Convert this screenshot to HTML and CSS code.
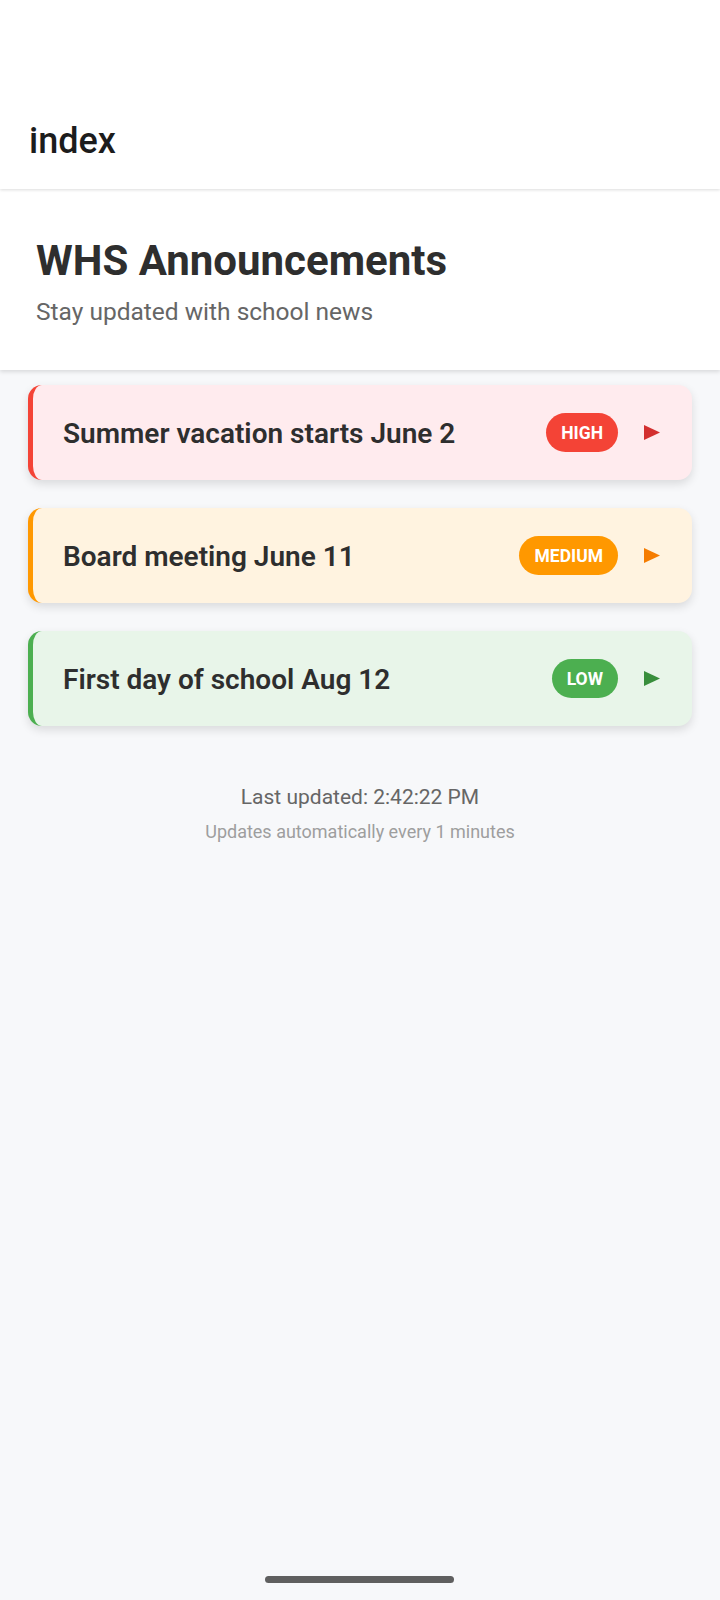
FILE: index.html
```html
<!DOCTYPE html>
<html lang="en">
<head>
<meta charset="utf-8">
<title>index</title>
<link rel="stylesheet" href="styles.css">
</head>
<body>
<div class="appbar"><span class="appbar-title">index</span></div>
<header class="intro">
  <h1 class="intro-title">WHS Announcements</h1>
  <p class="intro-sub">Stay updated with school news</p>
</header>
<main class="list">
  <div class="card card-high">
    <span class="card-text">Summer vacation starts June 2</span>
    <span class="badge badge-high">HIGH</span>
    <svg class="arrow" width="16" height="15" viewBox="0 0 16 15"><polygon points="0,0 16,7.5 0,15" fill="#d32f2f"/></svg>
  </div>
  <div class="card card-medium">
    <span class="card-text">Board meeting June 11</span>
    <span class="badge badge-medium">MEDIUM</span>
    <svg class="arrow" width="16" height="15" viewBox="0 0 16 15"><polygon points="0,0 16,7.5 0,15" fill="#f57c00"/></svg>
  </div>
  <div class="card card-low">
    <span class="card-text">First day of school Aug 12</span>
    <span class="badge badge-low">LOW</span>
    <svg class="arrow" width="16" height="15" viewBox="0 0 16 15"><polygon points="0,0 16,7.5 0,15" fill="#388e3c"/></svg>
  </div>
</main>
<footer class="footer">
  <p class="footer-main">Last updated: 2:42:22 PM</p>
  <p class="footer-sub">Updates automatically every 1 minutes</p>
</footer>
<div class="home-bar"></div>
</body>
</html>
```
FILE: styles.css
```css
* { box-sizing: border-box; }
html, body { margin: 0; padding: 0; }
body {
  background: #f7f8fa;
  font-family: Roboto, "Noto Sans", sans-serif;
  min-height: 1600px;
}
.appbar {
  height: 189px;
  background: #ffffff;
  display: flex;
  align-items: flex-end;
  padding: 0 0 28px 29px;
  position: relative;
  z-index: 2;
  box-shadow: 0 1px 3px rgba(0,0,0,0.14);
}
.appbar-title {
  font-size: 36px;
  line-height: 40px;
  font-weight: 500;
  color: #1c1c1c;
}
.intro {
  background: #ffffff;
  padding: 47px 36px 43px;
  box-shadow: 0 2px 4px rgba(0,0,0,0.12);
  position: relative;
  z-index: 1;
}
.intro-title {
  margin: 0;
  font-size: 42px;
  line-height: 50px;
  font-weight: 700;
  color: #2e2e2e;
}
.intro-sub {
  margin: 11px 0 0;
  font-size: 24.5px;
  line-height: 30px;
  color: #666666;
}
.list {
  padding: 15px 28px 0;
  display: flex;
  flex-direction: column;
  gap: 28px;
}
.card {
  height: 95px;
  border-radius: 14px;
  border-left: 5px solid;
  display: flex;
  align-items: center;
  padding: 0 32px 0 30px;
  box-shadow: 0 4px 10px rgba(0,0,0,0.12);
}
.card-high { background: #ffebee; border-left-color: #f44336; }
.card-medium { background: #fff3e0; border-left-color: #ff9800; }
.card-low { background: #e8f5e9; border-left-color: #4caf50; }
.card-text {
  flex: 1;
  font-size: 28px;
  font-weight: 600;
  color: #2e2e2e;
  padding-top: 2px;
}
.badge {
  height: 39px;
  border-radius: 20px;
  padding: 0 15px;
  display: flex;
  align-items: center;
  color: #ffffff;
  font-size: 17.5px;
  font-weight: 700;
  margin-right: 26px;
}
.badge-high { background: #f44336; }
.badge-medium { background: #ff9800; }
.badge-low { background: #4caf50; }
.arrow { display: block; }
.footer {
  text-align: center;
  padding-top: 57px;
}
.footer-main {
  margin: 0;
  font-size: 21px;
  line-height: 28px;
  color: #666666;
}
.footer-sub {
  margin: 9px 0 0;
  font-size: 18px;
  line-height: 24px;
  color: #9e9e9e;
}
.home-bar {
  position: fixed;
  left: 265px;
  top: 1576px;
  width: 189px;
  height: 7px;
  border-radius: 4px;
  background: #5f5f5f;
}
```
